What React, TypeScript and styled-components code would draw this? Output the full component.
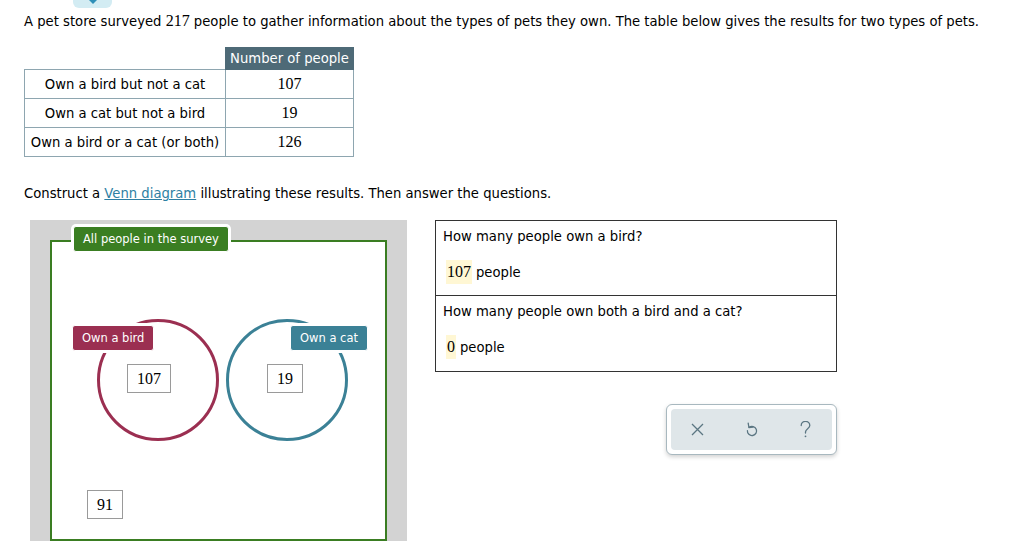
import styled, { createGlobalStyle } from "styled-components";

const GlobalStyle = createGlobalStyle`
    html, body {
        margin: 0;
        padding: 0;
        background: #ffffff;
        overflow: hidden;
    }
    body {
        font-family: "DejaVu Sans", Verdana, sans-serif;
        font-size: 13.2px;
        color: #000000;
    }
`;

const Page = styled.div`
    width: 1024px;
    height: 541px;
    padding: 0 24px;
    box-sizing: border-box;
    overflow: hidden;
`;

const TopTab = styled.div`
    display: flex;
    justify-content: center;
    width: 39px;
    height: 8px;
    margin-left: 49px;
    border-radius: 0 0 6px 6px;
    background-color: #d3ecf3;
    > span {
        width: 0;
        height: 0;
        border-left: 4px solid transparent;
        border-right: 4px solid transparent;
        border-top: 4px solid #2f8fb8;
    }
`;

const Text = styled.p<{ $top: number }>`
    margin: ${(props) => props.$top}px 0 0;
    line-height: 16px;
    white-space: nowrap;
`;

const Num = styled.span`
    font-family: "Liberation Serif", "Times New Roman", serif;
    font-size: 16px;
`;

const Link = styled.span`
    color: #2e7fa3;
    text-decoration: underline;
`;

const Table = styled.table`
    margin-top: 17px;
    border-collapse: collapse;
    table-layout: fixed;
    > tbody > tr > td {
        border: 1px solid #8ea6b0;
        height: 28px;
        padding: 0;
        text-align: center;
        white-space: nowrap;
    }
`;

const HeadCell = styled.th<{ $empty?: boolean }>`
    height: 21px;
    padding: 0;
    font-weight: normal;
    white-space: nowrap;
    color: #ffffff;
    background-color: ${(props) => (props.$empty ? "transparent" : "#4e6a77")};
    border: ${(props) => (props.$empty ? "none" : "1px solid #4e6a77")};
`;

const LabelCell = styled.td`
    width: 200px;
`;

const ValueCell = styled.td`
    width: 127px;
    font-family: "Liberation Serif", "Times New Roman", serif;
    font-size: 16px;
`;

const WorkRow = styled.div`
    display: flex;
    align-items: flex-start;
    margin-top: 18px;
`;

const VennArea = styled.div`
    width: 377px;
    height: 321px;
    margin-left: 6px;
    padding: 20px 20px 0;
    box-sizing: border-box;
    background-color: #d3d3d3;
`;

const Universe = styled.div`
    position: relative;
    height: 297px;
    border: 2px solid #3a7d22;
    background-color: #ffffff;
`;

const SetLabel = styled.div<{ $color: string; $left: number; $top: number }>`
    position: absolute;
    left: ${(props) => props.$left}px;
    top: ${(props) => props.$top}px;
    height: 24px;
    padding: 0 9px;
    display: flex;
    align-items: center;
    border: 1px solid #ffffff;
    border-radius: 3px;
    box-shadow: 0 0 0 2px #ffffff;
    background-color: ${(props) => props.$color};
    color: #ffffff;
    font-size: 11.5px;
    white-space: nowrap;
    z-index: 2;
`;

const Circle = styled.div<{ $color: string; $left: number }>`
    position: absolute;
    left: ${(props) => props.$left}px;
    top: 77px;
    width: 122px;
    height: 122px;
    box-sizing: border-box;
    border: 3px solid ${(props) => props.$color};
    border-radius: 50%;
`;

const ValueBox = styled.div<{ $left: number; $top: number }>`
    position: absolute;
    left: ${(props) => props.$left}px;
    top: ${(props) => props.$top}px;
    height: 29px;
    padding: 0 9px;
    display: flex;
    align-items: center;
    box-sizing: border-box;
    border: 1px solid #9a9a9a;
    background-color: #ffffff;
    font-family: "Liberation Serif", "Times New Roman", serif;
    font-size: 16px;
`;

const SideColumn = styled.div`
    display: flex;
    flex-direction: column;
    align-items: flex-end;
    margin-left: 28px;
`;

const QuestionBox = styled.div`
    width: 402px;
    box-sizing: border-box;
    border: 1px solid #333333;
`;

const Question = styled.div<{ $last?: boolean }>`
    height: 75px;
    padding: 8px 7px 0;
    box-sizing: border-box;
    border-bottom: ${(props) => (props.$last ? "none" : "1px solid #333333")};
`;

const Answer = styled.div`
    display: flex;
    align-items: center;
    margin-top: 16px;
    padding-left: 3px;
    gap: 4px;
`;

const AnswerValue = styled.span`
    padding: 0 1px;
    line-height: 24px;
    background-color: #fff7d4;
    font-family: "Liberation Serif", "Times New Roman", serif;
    font-size: 16px;
`;

const ToolBar = styled.div`
    display: flex;
    width: 171px;
    height: 51px;
    margin-top: 32px;
    padding: 4px;
    box-sizing: border-box;
    border: 1px solid #a8b8bf;
    border-radius: 6px;
    background-color: #ffffff;
    box-shadow: 0 2px 4px rgba(0, 0, 0, 0.18);
`;

const ToolInner = styled.div`
    display: flex;
    flex: 1;
    border-radius: 4px;
    background-color: #dfe6e9;
`;

const ToolButton = styled.button`
    flex: 1;
    display: flex;
    align-items: center;
    justify-content: center;
    padding: 0;
    border: none;
    background: none;
    > svg {
        display: block;
    }
`;

function App() {
    return (
        <Page>
            <GlobalStyle />
            <TopTab>
                <span />
            </TopTab>
            <Text $top={5}>
                A pet store surveyed <Num>217</Num> people to gather information about the types of pets they own. The table
                below gives the results for two types of pets.
            </Text>
            <Table>
                <colgroup>
                    <col style={{ width: 201 }} />
                    <col style={{ width: 128 }} />
                </colgroup>
                <thead>
                    <tr>
                        <HeadCell $empty />
                        <HeadCell>Number of people</HeadCell>
                    </tr>
                </thead>
                <tbody>
                    <tr>
                        <LabelCell>Own a bird but not a cat</LabelCell>
                        <ValueCell>107</ValueCell>
                    </tr>
                    <tr>
                        <LabelCell>Own a cat but not a bird</LabelCell>
                        <ValueCell>19</ValueCell>
                    </tr>
                    <tr>
                        <LabelCell>Own a bird or a cat (or both)</LabelCell>
                        <ValueCell>126</ValueCell>
                    </tr>
                </tbody>
            </Table>
            <Text $top={29}>
                Construct a <Link>Venn diagram</Link> illustrating these results. Then answer the questions.
            </Text>
            <WorkRow>
                <VennArea>
                    <Universe>
                        <SetLabel $color="#3a7e22" $left={21} $top={-16}>
                            All people in the survey
                        </SetLabel>
                        <Circle $color="#9b2f51" $left={45} />
                        <Circle $color="#3b8196" $left={174} />
                        <SetLabel $color="#9b2f51" $left={20} $top={83}>
                            Own a bird
                        </SetLabel>
                        <SetLabel $color="#3b8196" $left={238} $top={83}>
                            Own a cat
                        </SetLabel>
                        <ValueBox $left={75} $top={122}>
                            107
                        </ValueBox>
                        <ValueBox $left={215} $top={122}>
                            19
                        </ValueBox>
                        <ValueBox $left={35} $top={248}>
                            91
                        </ValueBox>
                    </Universe>
                </VennArea>
                <SideColumn>
                    <QuestionBox>
                        <Question>
                            How many people own a bird?
                            <Answer>
                                <AnswerValue>107</AnswerValue>
                                <span>people</span>
                            </Answer>
                        </Question>
                        <Question $last>
                            How many people own both a bird and a cat?
                            <Answer>
                                <AnswerValue>0</AnswerValue>
                                <span>people</span>
                            </Answer>
                        </Question>
                    </QuestionBox>
                    <ToolBar>
                        <ToolInner>
                            <ToolButton aria-label="clear">
                                <svg width="13" height="13" viewBox="0 0 13 13" fill="none">
                                    <path d="M1 1L12 12M12 1L1 12" stroke="#5b7682" strokeWidth="1.3" />
                                </svg>
                            </ToolButton>
                            <ToolButton aria-label="undo">
                                <svg width="12" height="15" viewBox="0 0 12 15" fill="none">
                                    <path
                                        d="M3.2 5.3A4.6 4.6 0 1 1 1.4 8.6"
                                        stroke="#5b7682"
                                        strokeWidth="1.3"
                                        strokeLinecap="round"
                                    />
                                    <path
                                        d="M2.2 1.2L2.9 5.5L7 5"
                                        stroke="#5b7682"
                                        strokeWidth="1.3"
                                        strokeLinecap="round"
                                        strokeLinejoin="round"
                                    />
                                </svg>
                            </ToolButton>
                            <ToolButton aria-label="help">
                                <svg width="11" height="17" viewBox="0 0 11 17" fill="none">
                                    <path
                                        d="M1.2 4.6A4.3 4.3 0 0 1 9.8 4.6C9.8 7.6 5.5 8 5.5 11V12"
                                        stroke="#5b7682"
                                        strokeWidth="1.3"
                                        strokeLinecap="round"
                                    />
                                    <circle cx="5.5" cy="15.3" r="0.9" fill="#5b7682" />
                                </svg>
                            </ToolButton>
                        </ToolInner>
                    </ToolBar>
                </SideColumn>
            </WorkRow>
        </Page>
    );
}

export default App;
